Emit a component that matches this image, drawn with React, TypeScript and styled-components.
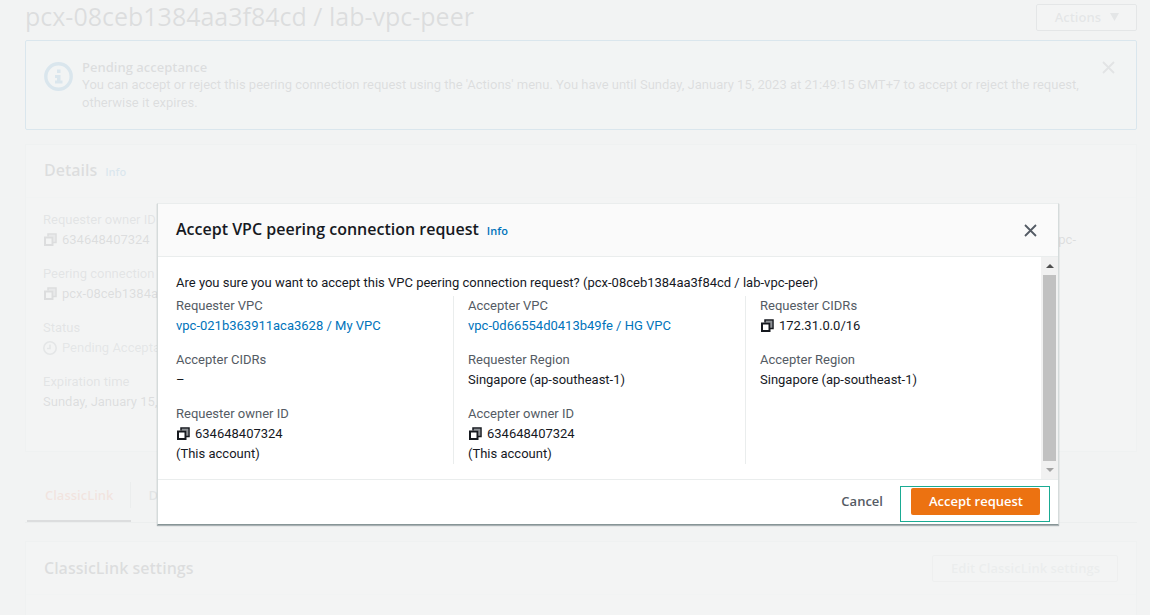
import React from "react";
import styled, { createGlobalStyle } from "styled-components";

const display = `"Open Sans", "Noto Sans", sans-serif`;

const GlobalStyle = createGlobalStyle`
  * { box-sizing: border-box; }
  body {
    margin: 0;
    background: #f2f3f3;
    color: #16191f;
    font: 13px/20px Roboto, "Open Sans", sans-serif;
  }
  h1, h2, p, dl, dt, dd { margin: 0; }
  h1, h2, button, strong { font-family: ${display}; }
  button { font-size: 13px; line-height: 20px; cursor: pointer; }
  a { color: #0073bb; text-decoration: none; }
`;

const Screen = styled.div`
  position: relative;
  min-height: 100vh;
`;

const Page = styled.main`
  display: flex;
  flex-direction: column;
  min-height: 100vh;
  padding: 4px 13px 0 25px;
`;

const PageHeader = styled.header`
  display: flex;
  justify-content: space-between;
  align-items: flex-start;
  height: 26px;
  margin-bottom: 10px;
`;

const PageTitle = styled.h1`
  font-size: 25px;
  line-height: 24px;
  font-weight: 400;
`;

const OutlineButton = styled.button<{ $muted?: boolean }>`
  display: flex;
  align-items: center;
  gap: 9px;
  height: 27px;
  padding: 0 17px 1px 18px;
  border: 1px solid ${(p) => (p.$muted ? "#c5cccc" : "#687078")};
  border-radius: 2px;
  background: ${(p) => (p.$muted ? "transparent" : "#fff")};
  color: ${(p) => (p.$muted ? "#aab7b8" : "#687078")};
  font-weight: 600;
`;

const Alert = styled.section`
  display: flex;
  align-items: flex-start;
  height: 90px;
  padding: 17px 21px 16px 18px;
  border: 1px solid #0073bb;
  border-radius: 2px;
  background: #f1faff;
  line-height: 18px;
`;

const AlertIcon = styled.svg`
  flex: none;
  margin: 4px 9px 0 0;
`;

const AlertText = styled.div`
  flex: 1;
  padding-right: 16px;

  strong {
    display: block;
    font-weight: 600;
  }
`;

const IconButton = styled.button`
  display: flex;
  padding: 3px 0;
  border: 0;
  background: none;
  color: #545b64;
`;

const Card = styled.section`
  border: 1px solid #d5dbdb;
  background: #fff;
`;

const CardHeader = styled.div`
  display: flex;
  align-items: center;
  justify-content: space-between;
  height: 53px;
  padding: 0 18px;
  border-bottom: 1px solid #eaeded;
  background: #fafafa;
`;

const Heading = styled.h2`
  display: flex;
  align-items: baseline;
  gap: 8px;
  font-size: 16px;
  line-height: 22px;
  font-weight: 600;
`;

const InfoLink = styled.a`
  font-size: 11px;
  font-weight: 600;
`;

const DetailsCard = styled(Card)`
  min-height: 308px;
  margin-top: 14px;
`;

const DetailsGrid = styled.div`
  display: grid;
  grid-template-columns: repeat(4, 1fr);
  padding: 12px 17px;
`;

const List = styled.dl`
  display: flex;
  flex-direction: column;
  gap: 14px;
`;

const Term = styled.dt`
  color: #545b64;
  white-space: nowrap;
`;

const Value = styled.dd<{ $muted?: boolean }>`
  display: flex;
  align-items: center;
  gap: 5px;
  color: ${(p) => (p.$muted ? "#687078" : "inherit")};
  white-space: nowrap;
`;

const LastColumn = styled.div`
  display: flex;
  justify-content: flex-end;
  padding: 20px 43px 0 0;
`;

const Tabs = styled.nav`
  display: flex;
  height: 54px;
  margin-top: 17px;
  padding-left: 2px;
  border-bottom: 1px solid #b5bdbd;
`;

const Tab = styled.button<{ $active?: boolean }>`
  display: flex;
  align-items: center;
  height: 53px;
  padding: 0;
  border: 0;
  border-bottom: 2px solid ${(p) => (p.$active ? "#16191f" : "transparent")};
  background: none;
  color: ${(p) => (p.$active ? "#ec5a30" : "#545b64")};
  font-weight: 600;

  span {
    padding: 3px 16px 3px 18px;
    border-right: 1px solid ${(p) => (p.$active ? "#aab7b8" : "transparent")};
  }
`;

const SettingsCard = styled(Card)`
  flex: 1;
  margin-top: 18px;
  border-bottom: 0;
`;

const Overlay = styled.div`
  position: absolute;
  inset: 0;
  padding: 203px 91px 0 157px;
  background: rgba(242, 243, 243, 0.9);
`;

const Modal = styled.div`
  border: 1px solid #d5dbdb;
  border-top-color: #eaeded;
  border-bottom-color: #879596;
  background: #fff;
  box-shadow: 0 1px 1px rgba(0, 28, 36, 0.3);
`;

const ModalHeader = styled.header`
  display: flex;
  align-items: center;
  justify-content: space-between;
  height: 53px;
  padding: 0 21px 0 18px;
  border-bottom: 1px solid #eaeded;
  background: #fafafa;
`;

const ModalBody = styled.div`
  display: flex;
`;

const ModalContent = styled.div`
  flex: 1;
  padding: 16px 4px 15px 3px;
`;

const Question = styled.p`
  padding-left: 15px;
  margin-bottom: 3px;
`;

const Columns = styled.div`
  display: grid;
  grid-template-columns: repeat(3, 1fr);
`;

const Column = styled(List)`
  padding-left: 14px;
  border-left: 1px solid #eaeded;

  &:first-child { border-left-color: transparent; }
`;

const ScrollTrack = styled.div`
  display: flex;
  flex-direction: column;
  align-items: center;
  width: 17px;
  padding: 7px 0;
  gap: 7px;
  background: #f1f1f1;
`;

const ScrollThumb = styled.div`
  flex: 1;
  width: 13px;
  background: #c1c1c1;
`;

const ModalFooter = styled.footer`
  display: flex;
  justify-content: flex-end;
  align-items: flex-start;
  gap: 17px;
  height: 45px;
  padding: 6px 8px 0;
  border-top: 1px solid #eaeded;
`;

const CancelButton = styled.button`
  height: 29px;
  padding: 0;
  border: 0;
  background: none;
  color: #545b64;
  font-weight: 600;
`;

const Highlight = styled.div`
  display: flex;
  align-items: flex-start;
  height: 36px;
  padding: 1px 9px 0 10px;
  border: 1px solid #1aab93;
`;

const PrimaryButton = styled.button`
  height: 27px;
  padding: 0 17px 2px 18px;
  border: 0;
  border-radius: 2px;
  background: #ec7211;
  color: #fff;
  font-weight: 600;
`;

const CopyIcon = () => (
  <svg width="14" height="14" viewBox="0 0 14 14" fill="none" stroke="currentColor" aria-hidden="true">
    <path d="M5 2.5H11.5V9" stroke="#8d9196" strokeWidth="2" />
    <path d="M5 3.5V1H13V9.5H10" strokeWidth="1.5" />
    <path d="M2 4.5H9.5V12H2Z" strokeWidth="2" />
  </svg>
);

const CloseIcon = ({ size }: { size: number }) => (
  <svg width={size} height={size} viewBox="0 0 13 13" fill="none" stroke="currentColor" strokeWidth="1.8" aria-hidden="true">
    <path d="M1 1L12 12M12 1L1 12" />
  </svg>
);

const PendingIcon = () => (
  <svg width="14" height="14" viewBox="0 0 14 14" fill="none" stroke="currentColor" strokeWidth="1.6" aria-hidden="true">
    <circle cx="7" cy="7" r="6.2" />
    <path d="M7 3.5V7.5H4" />
  </svg>
);

type Item = { label: string; value: string; href?: boolean; copy?: boolean; pending?: boolean; note?: string };

const details: Item[] = [
  { label: "Requester owner ID", value: "634648407324", copy: true },
  { label: "Peering connection ID", value: "pcx-08ceb1384aa3f84cd", copy: true },
  { label: "Status", value: "Pending Acceptance", pending: true },
  { label: "Expiration time", value: "Sunday, January 15, 2023" },
];

const columns: Item[][] = [
  [
    { label: "Requester VPC", value: "vpc-021b363911aca3628 / My VPC", href: true },
    { label: "Accepter CIDRs", value: "–" },
    { label: "Requester owner ID", value: "634648407324", copy: true, note: "(This account)" },
  ],
  [
    { label: "Accepter VPC", value: "vpc-0d66554d0413b49fe / HG VPC", href: true },
    { label: "Requester Region", value: "Singapore (ap-southeast-1)" },
    { label: "Accepter owner ID", value: "634648407324", copy: true, note: "(This account)" },
  ],
  [
    { label: "Requester CIDRs", value: "172.31.0.0/16", copy: true },
    { label: "Accepter Region", value: "Singapore (ap-southeast-1)" },
  ],
];

const Entry = ({ item }: { item: Item }) => (
  <div>
    <Term>{item.label}</Term>
    <Value $muted={item.pending}>
      {item.copy && <CopyIcon />}
      {item.pending && <PendingIcon />}
      {item.href ? <a href="#vpc">{item.value}</a> : item.value}
    </Value>
    {item.note && <Value>{item.note}</Value>}
  </div>
);

export default function App() {
  return (
    <Screen>
      <GlobalStyle />
      <Page>
        <PageHeader>
          <PageTitle>pcx-08ceb1384aa3f84cd / lab-vpc-peer</PageTitle>
          <OutlineButton>
            Actions
            <svg width="9" height="8" viewBox="0 0 9 8" fill="currentColor" aria-hidden="true">
              <path d="M0 0H9L4.5 8Z" />
            </svg>
          </OutlineButton>
        </PageHeader>

        <Alert>
          <AlertIcon width="29" height="29" viewBox="0 0 29 29" fill="none" aria-hidden="true">
            <circle cx="14.5" cy="14.5" r="12.7" stroke="#0073bb" strokeWidth="3.4" />
            <path d="M13 7.5H16.5V11H13ZM11 13H16.5V18.5H18.5V21.5H11V18.5H13V16H11Z" fill="#0073bb" />
          </AlertIcon>
          <AlertText>
            <strong>Pending acceptance</strong>
            <p>
              You can accept or reject this peering connection request using the 'Actions' menu. You have until Sunday,
              January 15, 2023 at 21:49:15 GMT+7 to accept or reject the request, otherwise it expires.
            </p>
          </AlertText>
          <IconButton aria-label="Dismiss">
            <CloseIcon size={13} />
          </IconButton>
        </Alert>

        <DetailsCard>
          <CardHeader>
            <Heading>
              Details <InfoLink href="#info">Info</InfoLink>
            </Heading>
          </CardHeader>
          <DetailsGrid>
            <List>
              {details.map((item) => (
                <Entry key={item.label} item={item} />
              ))}
            </List>
            <div />
            <div />
            <LastColumn>
              <span>vpc-</span>
            </LastColumn>
          </DetailsGrid>
        </DetailsCard>

        <Tabs>
          <Tab $active>
            <span>ClassicLink</span>
          </Tab>
          <Tab>
            <span>DNS</span>
          </Tab>
        </Tabs>

        <SettingsCard>
          <CardHeader>
            <Heading>ClassicLink settings</Heading>
            <OutlineButton $muted>Edit ClassicLink settings</OutlineButton>
          </CardHeader>
        </SettingsCard>
      </Page>

      <Overlay>
        <Modal role="dialog" aria-modal="true" aria-labelledby="dialog-title">
          <ModalHeader>
            <Heading id="dialog-title">
              Accept VPC peering connection request <InfoLink href="#info">Info</InfoLink>
            </Heading>
            <IconButton aria-label="Close">
              <CloseIcon size={13} />
            </IconButton>
          </ModalHeader>
          <ModalBody>
            <ModalContent>
              <Question>
                Are you sure you want to accept this VPC peering connection request? (pcx-08ceb1384aa3f84cd /
                lab-vpc-peer)
              </Question>
              <Columns>
                {columns.map((items, i) => (
                  <Column key={i}>
                    {items.map((item) => (
                      <Entry key={item.label} item={item} />
                    ))}
                  </Column>
                ))}
              </Columns>
            </ModalContent>
            <ScrollTrack aria-hidden="true">
              <svg width="8" height="4" viewBox="0 0 8 4">
                <path d="M0 4L4 0L8 4Z" fill="#505050" />
              </svg>
              <ScrollThumb />
              <svg width="8" height="4" viewBox="0 0 8 4">
                <path d="M0 0L4 4L8 0Z" fill="#a3a3a3" />
              </svg>
            </ScrollTrack>
          </ModalBody>
          <ModalFooter>
            <CancelButton>Cancel</CancelButton>
            <Highlight>
              <PrimaryButton>Accept request</PrimaryButton>
            </Highlight>
          </ModalFooter>
        </Modal>
      </Overlay>
    </Screen>
  );
}
